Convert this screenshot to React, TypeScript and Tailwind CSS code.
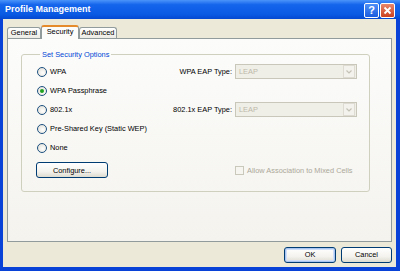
import React from "react";

const font = { fontFamily: '"Liberation Sans", Arial, sans-serif' };

const Radio = ({ checked, label }: { checked?: boolean; label: string }) => (
  <label className="flex items-center gap-[3px]">
    <span className="w-[10px] h-[10px] rounded-full border border-[#1c5180] bg-[radial-gradient(circle_at_60%_60%,#ffffff,#dcdad0)] flex items-center justify-center">
      {checked && <span className="w-[4px] h-[4px] rounded-full bg-[#21a121]" />}
    </span>
    <span className="text-[#000000]">{label}</span>
  </label>
);

const DisabledSelect = () => (
  <div className="w-[122px] h-[15px] border border-[#c9c7ba] bg-[#efeee7] flex items-center">
    <span className="flex-1 pl-[3px] text-[#bdb9aa]">LEAP</span>
    <span className="w-[12px] h-[13px] mr-px border border-[#dedcd2] bg-[#f3f2ec] flex items-center justify-center">
      <svg width="6" height="4" viewBox="0 0 6 4">
        <path d="M0.5 0.5 L3 3 L5.5 0.5" fill="none" stroke="#c4c2b6" strokeWidth="1.2" />
      </svg>
    </span>
  </div>
);

const XPButton = ({ label, primary, w }: { label: string; primary?: boolean; w: string }) => (
  <button
    className={`${w} h-[16px] rounded-[3px] border border-[#003c74] bg-[linear-gradient(180deg,#ffffff_0%,#f4f3ee_60%,#dedcd0_100%)] flex items-center justify-center text-black ${
      primary ? "shadow-[inset_0_0_0_1px_#a8c4f0,inset_0_0_0_2px_#cfdffa]" : ""
    }`}
  >
    {label}
  </button>
);

const Tab = ({ label, active, w }: { label: string; active?: boolean; w: string }) =>
  active ? (
    <div
      className={`${w} h-[14px] -mb-px z-10 relative rounded-t-[3px] border-x border-[#919b9c] border-t-2 border-t-[#e68b2c] bg-[#fcfcfb] flex items-center justify-center pb-[2px]`}
    >
      {label}
    </div>
  ) : (
    <div
      className={`${w} h-[11px] rounded-t-[3px] border border-b-0 border-[#919b9c] bg-[linear-gradient(180deg,#ffffff,#ecebe5)] flex items-center justify-center`}
    >
      {label}
    </div>
  );

export default function App() {
  return (
    <div
      className="w-[400px] h-[271px] flex flex-col bg-[#0842d6] text-[7.4px] leading-none select-none"
      style={font}
    >
      <div className="h-[19px] shrink-0 flex items-center justify-between pl-[5px] pr-[5px] bg-[linear-gradient(180deg,#4a94fa_0%,#1464ec_25%,#0a5ae4_75%,#0449d0_100%)]">
        <span className="text-white font-bold text-[9px]">Profile Management</span>
        <div className="flex gap-px pt-px">
          <div className="w-[15px] h-[15px] rounded-[2px] border border-white bg-[linear-gradient(180deg,#4f8ff7,#1a5cdf)] flex items-center justify-center text-white font-bold text-[11px]">
            ?
          </div>
          <div className="w-[15px] h-[15px] rounded-[2px] border border-white bg-[linear-gradient(180deg,#e9876c,#c9401f)] flex items-center justify-center">
            <svg width="9" height="9" viewBox="0 0 9 9">
              <path d="M1.5 1.5 L7.5 7.5 M7.5 1.5 L1.5 7.5" stroke="#ffffff" strokeWidth="1.8" />
            </svg>
          </div>
        </div>
      </div>

      <div className="flex-1 flex flex-col bg-[#ece9d8] ml-[3px] mr-[4px] mb-[4px] pl-[4px] pr-[4px]">
        <div className="flex items-end mt-[6px] h-[13px]">
          <Tab label="General" w="w-[34px]" />
          <Tab label="Security" active w="w-[38px]" />
          <Tab label="Advanced" w="w-[38px]" />
        </div>

        <div className="h-[204px] border border-[#919b9c] bg-[linear-gradient(180deg,#fcfcfb,#f4f3ee)] pl-[13px] pr-[21px] pt-[12px]">
          <fieldset className="h-[141px] border border-[#d0d0bf] rounded-[3px] pl-[15px] pr-[12px]">
            <legend className="ml-[3px] px-[2px] text-[#0046d5]">Set Security Options</legend>
            <div className="flex flex-col pt-[4px]">
              <div className="h-[19px] flex items-center">
                <div className="flex-1">
                  <Radio label="WPA" />
                </div>
                <span className="mr-[3px]">WPA EAP Type:</span>
                <DisabledSelect />
              </div>
              <div className="h-[19px] flex items-center">
                <Radio label="WPA Passphrase" checked />
              </div>
              <div className="h-[19px] flex items-center">
                <div className="flex-1">
                  <Radio label="802.1x" />
                </div>
                <span className="mr-[3px]">802.1x EAP Type:</span>
                <DisabledSelect />
              </div>
              <div className="h-[19px] flex items-center">
                <Radio label="Pre-Shared Key (Static WEP)" />
              </div>
              <div className="h-[19px] flex items-center">
                <Radio label="None" />
              </div>
              <div className="flex items-center mt-[5px]">
                <div className="flex-1 -ml-[1px]">
                  <XPButton label="Configure..." w="w-[72px]" />
                </div>
                <div className="w-[122px] flex items-center gap-[3px]">
                  <span className="w-[9px] h-[9px] border border-[#cac8bb] bg-[#f6f5f0]" />
                  <span className="text-[#aca899]">Allow Association to Mixed Cells</span>
                </div>
              </div>
            </div>
          </fieldset>
        </div>

        <div className="flex-1 flex items-center justify-end gap-[5px] pt-[1px]">
          <XPButton label="OK" primary w="w-[52px]" />
          <XPButton label="Cancel" w="w-[51px]" />
        </div>
      </div>
    </div>
  );
}
